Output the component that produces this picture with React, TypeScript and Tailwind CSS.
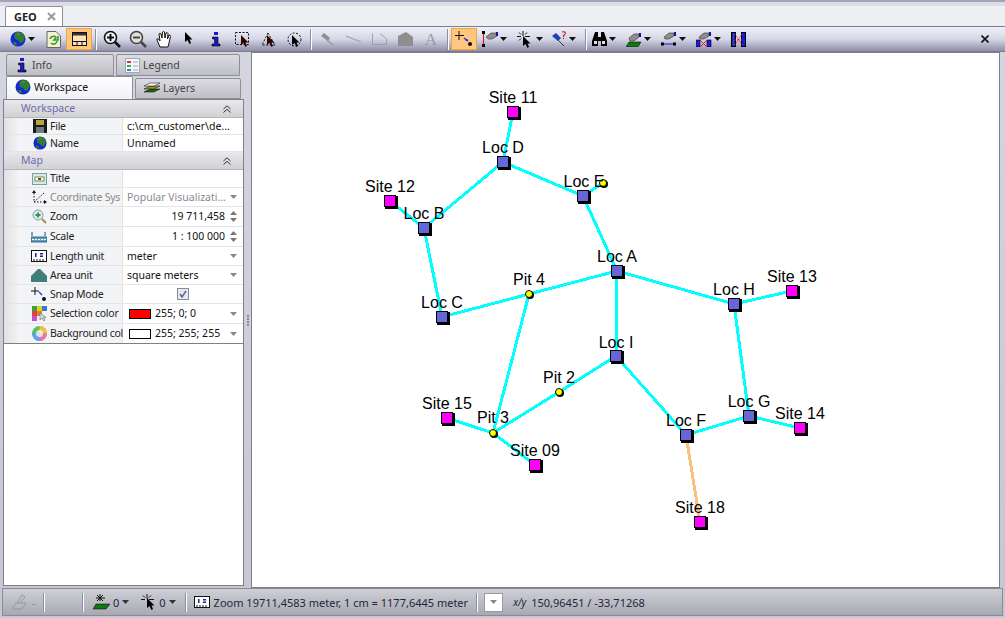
import type { ReactNode } from "react";

const Globe = ({ size = 16 }: { size?: number }) => (
  <svg width={size} height={size} viewBox="0 0 16 16" className="shrink-0">
    <circle cx="8" cy="8" r="7.5" fill="#1526d8" />
    <path d="M6 1 L12 1.5 L15 6 L13 11 L10 12 L8 9 L5 8 L4 4 Z" fill="#2f7d32" />
    <path d="M3 11 L6 11 L7 14 L4 14 Z" fill="#2f7d32" />
    <path d="M7 2 L10 2 L9 4 L7 4 Z" fill="#6d7f3a" />
  </svg>
);

const Caret = ({ color = "#111" }: { color?: string }) => (
  <svg width="7" height="4" viewBox="0 0 7 4" className="shrink-0">
    <path d="M0 0 H7 L3.5 4 Z" fill={color} />
  </svg>
);

const Cursor = ({ x = 0, y = 0, fill = "#000" }: { x?: number; y?: number; fill?: string }) => (
  <path
    transform={`translate(${x} ${y})`}
    d="M0 0 L0 10 L2.5 8 L4.5 12 L6 11 L4.5 7.5 L7.5 7.5 Z"
    fill={fill}
  />
);

const Ico = ({ children, w = 18, h = 18 }: { children: ReactNode; w?: number; h?: number }) => (
  <svg width={w} height={h} viewBox={`0 0 ${w} ${h}`} className="shrink-0">
    {children}
  </svg>
);

const ZoomIco = ({ plus }: { plus?: boolean }) => (
  <Ico>
    <circle cx="7.5" cy="7.5" r="6" fill={plus ? "#f4f4f4" : "#e0e0e0"} stroke={plus ? "#111" : "#444"} strokeWidth="1.6" />
    <path d="M12 12 L17 17" stroke={plus ? "#111" : "#444"} strokeWidth="2.6" />
    <path d="M4 7.5 H11" stroke={plus ? "#111" : "#444"} strokeWidth="2" />
    {plus && <path d="M7.5 4 V11" stroke="#111" strokeWidth="2" />}
  </Ico>
);

const HandIco = () => (
  <Ico>
    <path
      d="M5 17 L2 10 Q1.5 8 3.5 9 L5 11 L4 4 Q4.5 2.5 6 4 L7 8 L7.5 2 Q8.5 1 9.5 2 L10 8 L11 3 Q12.5 2 13 3.5 L12.5 9 L14 5 Q15.5 5 15.5 6.5 L14 13 L13 17 Z"
      fill="#fff"
      stroke="#111"
      strokeWidth="1"
    />
  </Ico>
);

const InfoIco = () => (
  <Ico w={14} h={16}>
    <rect x="5" y="1" width="4" height="3" fill="#1a1ac8" />
    <path d="M3.5 6 H9 V13 H11 V15 H3 V13 H5.5 V8 H3.5 Z" fill="#1a1ac8" stroke="#000" strokeWidth="0.6" />
  </Ico>
);

const Sep = () => <div className="ml-[3px] mr-[2px] h-[21px] w-[2px] shrink-0 border-l border-[#8d8ea6] bg-white" />;

const Slot = ({ children, active }: { children?: ReactNode; active?: boolean }) => (
  <div
    className={`flex h-[22px] w-[26px] shrink-0 items-center justify-center ${
      active ? "border border-[#f2a53c] bg-[#ffc67f]" : ""
    }`}
  >
    {children}
  </div>
);

const Drop = ({ children, w }: { children: ReactNode; w: string }) => (
  <div className={`flex h-[22px] shrink-0 items-center justify-between ${w}`}>
    {children}
    <Caret />
  </div>
);

const Toolbar = () => (
  <div className="flex h-[26px] shrink-0 items-center border-y border-y-[#7d7d85] bg-gradient-to-b from-[#eff0f8] via-[#d6d7e6] to-[#8f8fa9] pl-[10px] pr-[16px]">
    <div className="flex w-[25px] shrink-0 items-center justify-between">
      <Globe />
      <Caret />
    </div>
    <div className="w-[5px] shrink-0" />
    <Slot>
      <Ico w={15} h={17}>
        <path d="M1 .5 H10 L14.5 5 V16.5 H1 Z" fill="#f3f0cf" stroke="#666" />
        <path d="M4 8 A3.5 3.5 0 0 1 10 6.5 L8 9 H12 V5" fill="none" stroke="#2e9e2e" strokeWidth="1.6" />
        <path d="M11 10 A3.5 3.5 0 0 1 5 12" fill="none" stroke="#2e9e2e" strokeWidth="1.6" />
      </Ico>
    </Slot>
    <Slot active>
      <Ico w={15} h={14}>
        <rect x=".5" y=".5" width="14" height="13" fill="#ffe2b8" stroke="#111" />
        <rect x="1" y="1" width="13" height="2.5" fill="#333" />
        <path d="M1 9.5 H14 M5 9.5 V13 M10 9.5 V13" stroke="#111" fill="none" />
      </Ico>
    </Slot>
    <Sep />
    <Slot><ZoomIco plus /></Slot>
    <Slot><ZoomIco /></Slot>
    <Slot><HandIco /></Slot>
    <Slot>
      <Ico w={10} h={14}>
        <Cursor />
      </Ico>
    </Slot>
    <Slot><InfoIco /></Slot>
    <Slot>
      <Ico w={15} h={15}>
        <rect x=".5" y=".5" width="13" height="12" fill="none" stroke="#111" strokeDasharray="2 1.5" />
        <Cursor x={6} y={3} fill="#300" />
      </Ico>
    </Slot>
    <Slot>
      <Ico w={15} h={15}>
        <path d="M7 1 L1 13 H14 Z" fill="none" stroke="#111" strokeDasharray="2 1.5" />
        <Cursor x={6} y={3} fill="#300" />
      </Ico>
    </Slot>
    <Slot>
      <Ico w={15} h={15}>
        <circle cx="7.5" cy="7.5" r="6.5" fill="none" stroke="#111" strokeDasharray="2 1.5" />
        <Cursor x={5} y={3} />
      </Ico>
    </Slot>
    <Sep />
    <Slot>
      <Ico w={14} h={14}>
        <path d="M1 4 L4 1 L10 6 L8 9 Z" fill="#8e8e8e" />
        <path d="M7 8 L13 13" stroke="#999" strokeWidth="1.5" />
      </Ico>
    </Slot>
    <Slot>
      <Ico w={15} h={8}>
        <path d="M0 1 L15 7" stroke="#a7a7b0" strokeWidth="1.2" />
      </Ico>
    </Slot>
    <Slot>
      <Ico w={15} h={12}>
        <path d="M.5 .5 V11.5 H14.5 V6 L8 .5" fill="none" stroke="#a0a0a8" />
      </Ico>
    </Slot>
    <Slot>
      <Ico w={15} h={14}>
        <path d="M0 4 L8 0 L15 5 V14 H0 Z" fill="#8e8e8e" />
      </Ico>
    </Slot>
    <Slot>
      <span className="font-['Liberation_Serif',serif] text-[17px] leading-none text-[#9a9aa2]">A</span>
    </Slot>
    <Sep />
    <Slot active>
      <Ico w={18} h={16}>
        <path d="M4 0 V9 M0 4.500 H9" stroke="#111" />
        <path d="M9 7 L13 10" stroke="#1b2be0" strokeWidth="1.4" />
        <path d="M10 10 H13 V8 Z" fill="#1b2be0" />
        <circle cx="15" cy="13" r="2" fill="#111" />
      </Ico>
    </Slot>
    <div className="w-[5px] shrink-0" />
    <Drop w="w-[25px]">
      <Ico w={17} h={16}>
        <path d="M1.500 2 V15" stroke="#e01c1c" strokeWidth="1.2" />
        <rect y="0" width="3" height="3" fill="#000" />
        <rect y="13" width="3" height="3" fill="#000" />
        <path d="M4 6 L9 2 H15 V5 L10 8 H6 Z" fill="#8d8d8d" stroke="#333" strokeWidth=".6" />
        <rect x="14" y="1" width="2" height="4" fill="#14149c" />
      </Ico>
    </Drop>
    <div className="w-[10px] shrink-0" />
    <Drop w="w-[26px]">
      <Ico w={15} h={17}>
        <path d="M6 0 V5 M0 5.500 H4 M8 5.500 H13 M2 1.500 L4 3.500 M10 1.500 L8 3.500 M2 9.500 L4 7.500" stroke="#111" />
        <Cursor x={6} y={5} />
      </Ico>
    </Drop>
    <div className="w-[8px] shrink-0" />
    <Drop w="w-[25px]">
      <Ico w={18} h={16}>
        <path d="M1 5 L5 2 L10 7 L7 10 Z" fill="#1b3fc0" />
        <path d="M7 9 L13 15" stroke="#333" />
        <path d="M11 1 Q15 0 14 3 L12.500 5 V6 M12.500 7 V8" fill="none" stroke="#c02020" strokeWidth="1.2" />
      </Ico>
    </Drop>
    <div className="w-[6px] shrink-0" />
    <Sep />
    <div className="w-[2px] shrink-0" />
    <Drop w="w-[25px]">
      <Ico w={17} h={14}>
        <path d="M4 0 H7 V5 H10 V0 H13 L16 9 V14 H10 V9 H7 V14 H1 V9 Z" fill="#000" />
        <rect x="3" y="9" width="3" height="3" fill="#ddd" />
        <rect x="11" y="9" width="3" height="3" fill="#ddd" />
      </Ico>
    </Drop>
    <div className="w-[10px] shrink-0" />
    <Drop w="w-[25px]">
      <Ico w={16} h={15}>
        <path d="M3 10 H15 L12 15 H0 Z" fill="#117611" stroke="#000" strokeWidth=".5" />
        <path d="M3 6 L8 2 H13 V5 L8 9 H4 Z" fill="#8d8d8d" stroke="#333" strokeWidth=".6" />
        <rect x="13" y="1" width="2" height="4" fill="#14149c" />
      </Ico>
    </Drop>
    <div className="w-[10px] shrink-0" />
    <Drop w="w-[25px]">
      <Ico w={16} h={14}>
        <path d="M3 5 L8 1 H13 V4 L8 7 H4 Z" fill="#8d8d8d" stroke="#333" strokeWidth=".6" />
        <rect x="13" y="0" width="2" height="4" fill="#14149c" />
        <path d="M1 12 H14" stroke="#1b1bd0" />
        <rect y="10.500" width="3" height="3" fill="#000" />
        <rect x="12" y="10.500" width="3" height="3" fill="#000" />
      </Ico>
    </Drop>
    <div className="w-[10px] shrink-0" />
    <Drop w="w-[25px]">
      <Ico w={16} h={15}>
        <path d="M3 5 L8 1 H13 V4 L8 7 H4 Z" fill="#8d8d8d" stroke="#333" strokeWidth=".6" />
        <rect x="13" y="0" width="2" height="4" fill="#14149c" />
        <rect x="0" y="8" width="4" height="7" fill="#1b1be0" stroke="#000" strokeWidth=".6" />
        <rect x="11" y="8" width="4" height="7" fill="#1b1be0" stroke="#000" strokeWidth=".6" />
        <path d="M4 8 L11 15 M11 8 L4 15" stroke="#e02020" />
      </Ico>
    </Drop>
    <div className="w-[10px] shrink-0" />
    <Ico w={15} h={15}>
      <rect x=".5" y=".5" width="4" height="14" fill="#1b1be0" stroke="#000" />
      <rect x="10.500" y=".5" width="4" height="14" fill="#1b1be0" stroke="#000" />
      <path d="M4 2 L11 13 M11 2 L4 13 M4 8 L11 8" stroke="#e02020" strokeDasharray="1 1" />
      <path d="M2.500 2 V13" stroke="#1a9a40" strokeDasharray="1 1" />
    </Ico>
    <div className="flex-1" />
    <svg width="8" height="8" viewBox="0 0 8 8">
      <path d="M.5 .5 L7.500 7.500 M7.500 .5 L.5 7.500" stroke="#111" strokeWidth="1.6" />
    </svg>
  </div>
);

const Tab = ({
  icon,
  label,
  w,
  active,
  h,
}: {
  icon: ReactNode;
  label: string;
  w: string;
  h: string;
  active?: boolean;
}) => (
  <div
    className={`flex shrink-0 items-center gap-[3px] rounded-t-[2px] border border-[#8e8e96] pl-[8px] ${w} ${h} ${
      active
        ? "border-b-0 bg-gradient-to-b from-[#ffffff] to-[#f0f1f6] pb-[2px] text-[#111]"
        : "bg-gradient-to-b from-[#dcdce2] to-[#bebfc4] text-[#444]"
    }`}
  >
    {icon}
    <span>{label}</span>
  </div>
);

const SectionHead = ({ title }: { title: string }) => (
  <div className="flex h-[18px] items-center justify-between border-b border-[#b8b8b8] bg-gradient-to-b from-[#e9e9ed] to-[#d0d1d5] pl-[17px] pr-[12px] text-[#6d6da8]">
    <span>{title}</span>
    <svg width="8" height="8" viewBox="0 0 8 8" fill="none" stroke="#333">
      <path d="M.5 4 L4 .8 L7.500 4 M.5 7.500 L4 4.300 L7.500 7.500" />
    </svg>
  </div>
);

const Spin = () => (
  <div className="flex flex-col gap-[3px]">
    <svg width="7" height="4" viewBox="0 0 7 4"><path d="M0 4 H7 L3.500 0 Z" fill="#777" /></svg>
    <Caret color="#777" />
  </div>
);

const Row = ({
  h,
  icon,
  label,
  dim,
  children,
  right,
  alignEnd,
  last,
}: {
  h: string;
  icon: ReactNode;
  label: string;
  dim?: boolean;
  children?: ReactNode;
  right?: ReactNode;
  alignEnd?: boolean;
  last?: boolean;
}) => (
  <div className={`flex border-b ${last ? "border-[#7f7f86]" : "border-[#e4e4e8]"} ${h}`}>
    <div className="w-[14px] shrink-0 bg-gradient-to-r from-[#e2e2e6] to-[#f1f1f4]" />
    <div className="flex w-[105px] shrink-0 items-center whitespace-nowrap border-r border-[#e2e2e6] bg-[#f3f4f6]">
      <div className="flex w-[32px] shrink-0 justify-end pr-[3px]">{icon}</div>
      <span className={`tracking-[-0.25px] ${dim ? "text-[#888]" : "text-[#222]"}`}>{label}</span>
    </div>
    <div
      className={`flex min-w-0 flex-1 items-center whitespace-nowrap bg-white pl-[4px] pr-[6px] ${
        dim ? "text-[#8a8a92]" : "text-[#111]"
      } ${alignEnd ? "justify-end gap-[5px]" : "justify-between"}`}
    >
      {children}
      {right}
    </div>
  </div>
);

const Swatch = ({ color, text }: { color: string; text: string }) => (
  <span className="ml-[2px] flex items-center gap-[4px]">
    <span className={`h-[10px] w-[22px] border border-black ${color}`} />
    <span>{text}</span>
  </span>
);

const Properties = () => (
  <div className="flex-1 border border-[#7f7f86] bg-white">
    <SectionHead title="Workspace" />
    <Row
      h="h-[17px]"
      label="File"
      icon={
        <Ico w={14} h={14}>
          <rect width="14" height="14" fill="#1c1c1c" />
          <rect x="3" y="1" width="8" height="5" fill="#b7a63a" />
          <rect x="3" y="8" width="8" height="6" fill="#6f7d7f" />
        </Ico>
      }
    >
      c:\cm_customer\de...
    </Row>
    <Row h="h-[17px]" label="Name" icon={<Globe size={14} />}>
      Unnamed
    </Row>
    <SectionHead title="Map" />
    <Row
      h="h-[18px]"
      label="Title"
      icon={
        <Ico w={15} h={12}>
          <rect x=".5" y=".5" width="14" height="11" fill="#dceadb" stroke="#7a9bb0" />
          <rect x="3" y="4" width="9" height="4" fill="#fff" stroke="#2e8a3a" strokeWidth=".8" />
          <rect x="6" y="5" width="3" height="2" fill="#c02020" />
        </Ico>
      }
    />
    <Row
      h="h-[19px]"
      label="Coordinate Sys"
      dim
      icon={
        <Ico w={15} h={15}>
          <path d="M2 3 V12 H13 M2 12 L12 3" fill="none" stroke="#111" strokeDasharray="1.500 1.500" />
          <path d="M2 0 L0 3 H4 Z M15 12 L12 10 V14 Z" fill="#111" />
        </Ico>
      }
      right={<Caret color="#888" />}
    >
      Popular Visualizati...
    </Row>
    <Row
      h="h-[20px]"
      label="Zoom"
      alignEnd
      icon={
        <Ico w={15} h={15}>
          <circle cx="6" cy="6" r="5" fill="#dfe8ef" stroke="#8aa0b0" />
          <path d="M3.500 6 H8.500 M6 3.500 V8.500" stroke="#2e9e2e" strokeWidth="1.800" />
          <path d="M10 10 L14 14" stroke="#a08a5a" strokeWidth="2" />
        </Ico>
      }
      right={<Spin />}
    >
      19 711,458
    </Row>
    <Row
      h="h-[20px]"
      label="Scale"
      alignEnd
      icon={
        <Ico w={16} h={12}>
          <path d="M1 1 V5 M14 1 V5" stroke="#124a80" />
          <rect y="6" width="16" height="5" fill="#5fa0c0" stroke="#124a80" strokeWidth=".8" />
          <path d="M1 8.500 H15" stroke="#fff" strokeDasharray="2 1" />
        </Ico>
      }
      right={<Spin />}
    >
      1 : 100 000
    </Row>
    <Row
      h="h-[19px]"
      label="Length unit"
      icon={
        <Ico w={16} h={12}>
          <rect x=".5" y=".5" width="15" height="11" fill="#fff" stroke="#111" />
          <path d="M3 12 V9 M6 12 V9 M9 12 V9 M12 12 V9" stroke="#111" />
          <rect x="4" y="3" width="1.500" height="4" fill="#1c1c9c" />
          <rect x="9" y="3" width="3" height="1.500" fill="#1c1c9c" />
          <rect x="9" y="5.500" width="3" height="1.500" fill="#1c1c9c" />
        </Ico>
      }
      right={<Caret color="#888" />}
    >
      meter
    </Row>
    <Row
      h="h-[19px]"
      label="Area unit"
      icon={
        <Ico w={16} h={13}>
          <path d="M0 7 L7 0 H9 L16 7 V13 H0 Z" fill="#3f7f7a" />
        </Ico>
      }
      right={<Caret color="#888" />}
    >
      square meters
    </Row>
    <Row
      h="h-[19px]"
      label="Snap Mode"
      icon={
        <Ico w={16} h={15}>
          <path d="M4 0 V8 M0 4 H8" stroke="#111" />
          <path d="M8 5 L11 8" stroke="#1b2be0" strokeWidth="1.200" />
          <circle cx="13" cy="12" r="2" fill="#111" />
        </Ico>
      }
    >
      <span className="ml-[50px] flex h-[12px] w-[12px] items-center justify-center border border-[#8a8a92] bg-[#e6e8f2]">
        <svg width="8" height="8" viewBox="0 0 8 8">
          <path d="M1 4 L3 7 L7 1" fill="none" stroke="#5a6a8a" strokeWidth="1.500" />
        </svg>
      </span>
    </Row>
    <Row
      h="h-[20px]"
      label="Selection color"
      icon={
        <Ico w={15} h={15}>
          <rect width="5" height="5" fill="#3fa03f" />
          <rect x="5" width="5" height="5" fill="#e0d020" />
          <rect x="10" width="5" height="5" fill="#3a78d0" />
          <rect y="5" width="5" height="5" fill="#e04040" />
          <rect x="5" y="5" width="5" height="5" fill="#e08030" />
          <rect y="10" width="5" height="5" fill="#c050d0" />
          <path d="M8 7 V14 L10 12 L12 15 L13 14 L11.500 11.500 H14 Z" fill="#ddd" stroke="#666" strokeWidth=".6" />
        </Ico>
      }
      right={<Caret color="#888" />}
    >
      <Swatch color="bg-[#ff0000]" text="255; 0; 0" />
    </Row>
    <Row
      h="h-[20px]"
      label="Background col"
      last
      icon={
        <svg width="15" height="15" viewBox="0 0 15 15" className="shrink-0">
          <circle cx="7.500" cy="7.500" r="7.500" fill="#55c060" />
          <path d="M7.500 7.500 V0 A7.500 7.500 0 0 1 15 7.500 Z" fill="#f5c040" />
          <path d="M7.500 7.500 H15 A7.500 7.500 0 0 1 7.500 15 Z" fill="#f070b0" />
          <path d="M7.500 7.500 V15 A7.500 7.500 0 0 1 0 7.500 Z" fill="#60a0f0" />
          <circle cx="7.500" cy="7.500" r="3.500" fill="#fff" opacity=".7" />
        </svg>
      }
      right={<Caret color="#888" />}
    >
      <Swatch color="bg-white" text="255; 255; 255" />
    </Row>
  </div>
);

const nodes: Record<string, [number, number]> = {
  s11: [513, 112],
  s12: [390, 201],
  s13: [792, 291],
  s14: [800, 428],
  s15: [447, 418],
  s09: [535, 465],
  s18: [700, 522],
  d: [503, 162],
  e: [583, 196],
  a: [617, 271],
  b: [424, 228],
  c: [442, 317],
  h: [734, 304],
  i: [616, 356],
  g: [749, 416],
  f: [686, 435],
  p4: [529, 294],
  p2: [559, 392],
  p3: [493, 433],
  y: [603, 183],
};

const edges = [
  ["s11", "d"],
  ["d", "b"],
  ["d", "e"],
  ["e", "y"],
  ["e", "a"],
  ["a", "p4"],
  ["a", "h"],
  ["a", "i"],
  ["p4", "c"],
  ["p4", "p3"],
  ["b", "c"],
  ["s12", "b"],
  ["h", "s13"],
  ["h", "g"],
  ["i", "p2"],
  ["p2", "p3"],
  ["i", "f"],
  ["f", "g"],
  ["g", "s14"],
  ["s15", "p3"],
  ["p3", "s09"],
];

const labels: [string, number, number][] = [
  ["Site 11", 513, 103],
  ["Loc D", 503, 153],
  ["Loc E", 584, 187],
  ["Site 12", 390, 192],
  ["Loc B", 424, 219],
  ["Loc A", 617, 262],
  ["Pit 4", 529, 285],
  ["Loc C", 442, 308],
  ["Loc H", 734, 295],
  ["Site 13", 792, 282],
  ["Loc I", 616, 348],
  ["Pit 2", 559, 383],
  ["Site 15", 447, 409],
  ["Pit 3", 493, 423],
  ["Site 09", 535, 456],
  ["Loc G", 749, 407],
  ["Site 14", 800, 419],
  ["Loc F", 686, 426],
  ["Site 18", 700, 513],
];

// coordinates above are page coordinates, the svg sits at 252,53
const MapView = () => (
  <div className="min-w-0 flex-1 border border-[#7f7f86] bg-white">
    <svg width="748" height="534" viewBox="252 53 748 534" className="block font-['Liberation_Sans',sans-serif]">
      {edges.map(([from, to]) => (
        <line
          key={from + to}
          x1={nodes[from][0]}
          y1={nodes[from][1]}
          x2={nodes[to][0]}
          y2={nodes[to][1]}
          stroke="#00ffff"
          strokeWidth="3"
          shapeRendering="crispEdges"
        />
      ))}
      <line x1={686} y1={435} x2={700} y2={522} stroke="#fbc07c" strokeWidth="3" shapeRendering="crispEdges" />
      {Object.entries(nodes).map(([id, [x, y]]) => {
        if (id === "p4" || id === "p2" || id === "p3" || id === "y") {
          return (
            <g key={id}>
              <circle cx={x + 1} cy={y + 1} r="4" fill="#000" />
              <circle cx={x} cy={y} r="3.500" fill="#ffff00" stroke="#000" />
            </g>
          );
        }
        const fill = id[0] === "s" ? "#ff00ff" : "#6666d8";
        return (
          <g key={id} shapeRendering="crispEdges">
            <rect x={x - 5} y={y - 5} width="13" height="13" fill="#000" />
            <rect x={x - 5.500} y={y - 5.500} width="11" height="11" fill={fill} stroke="#000" />
          </g>
        );
      })}
      {labels.map(([text, x, y]) => (
        <text key={text} x={x} y={y} textAnchor="middle" fontSize="16" fill="#000">
          {text}
        </text>
      ))}
    </svg>
  </div>
);

const StatusSep = () => <div className="h-[19px] w-[2px] shrink-0 border-l border-[#8d8ea6] bg-white" />;

const StatusBar = () => (
  <div className="mx-[2px] flex h-[28px] items-center border border-[#8a8a92] bg-gradient-to-b from-[#cfd0d6] to-[#a8a9b2] text-[11px] text-[#25253f]">
    <div className="ml-[8px] flex w-[32px] shrink-0 items-center gap-[4px] text-[#888]">
      <Ico w={17} h={16}>
        <path d="M1 15 L5 9 H15 L11 15 Z" fill="none" stroke="#999" />
        <path d="M6 9 L11 1 L14 3 L9 9" fill="none" stroke="#999" />
      </Ico>
      <span>-</span>
    </div>
    <StatusSep />
    <div className="w-[37px] shrink-0" />
    <StatusSep />
    <div className="ml-[9px] flex items-center gap-[3px]">
      <Ico w={17} h={16}>
        <path d="M3 10 H17 L13 15 H0 Z" fill="#117611" stroke="#000" strokeWidth=".5" />
        <path d="M7 0 V7 M3 4 H12 M4 1 L10 7 M10 1 L4 7" stroke="#111" />
      </Ico>
      <span>0</span>
      <Caret color="#333" />
    </div>
    <div className="ml-[12px] flex items-center gap-[3px]">
      <Ico w={15} h={16}>
        <path d="M6 0 V5 M0 5.500 H4 M8 5.500 H13 M2 1.500 L4 3.500 M10 1.500 L8 3.500" stroke="#111" />
        <Cursor x={6} y={4} />
      </Ico>
      <span>0</span>
      <Caret color="#333" />
    </div>
    <div className="ml-[9px]"><StatusSep /></div>
    <div className="ml-[7px] flex shrink-0 items-center gap-[4px] whitespace-nowrap">
      <Ico w={16} h={12}>
        <rect x=".5" y=".5" width="15" height="11" fill="#fff" stroke="#111" />
        <path d="M3 12 V9 M6 12 V9 M9 12 V9 M12 12 V9" stroke="#111" />
        <rect x="4" y="3" width="1.500" height="4" fill="#1c1c9c" />
        <rect x="9" y="3" width="3" height="1.500" fill="#1c1c9c" />
        <rect x="9" y="5.500" width="3" height="1.500" fill="#1c1c9c" />
      </Ico>
      <span>Zoom 19711,4583 meter, 1 cm = 1177,6445 meter</span>
    </div>
    <div className="ml-[8px]"><StatusSep /></div>
    <div className="ml-[6px] flex h-[19px] w-[19px] items-center justify-center border border-[#9a9aa2] bg-white">
      <Caret color="#888" />
    </div>
    <span className="ml-[10px] text-[10px] italic">x/y</span>
    <span className="ml-[5px]">150,96451 / -33,71268</span>
  </div>
);

export default function App() {
  return (
    <div className="flex h-[618px] w-[1005px] flex-col overflow-hidden bg-[#eeeff3] font-['Noto_Sans',sans-serif] text-[10.5px] leading-none">
      <div className="h-[6px] shrink-0 border-t-2 border-t-[#a5a3b8] bg-[#dcdbea]" />
      <div className="flex h-[20px] shrink-0 pl-[5px]">
        <div className="flex w-[58px] items-center gap-[10px] rounded-t-[2px] border border-b-0 border-[#8e8e96] bg-white pl-[8px] text-[11px] font-bold text-[#222]">
          <span>GEO</span>
          <svg width="9" height="9" viewBox="0 0 9 9">
            <path d="M1 1 L8 8 M8 1 L1 8" stroke="#9a9aa2" strokeWidth="2" />
          </svg>
        </div>
      </div>
      <Toolbar />
      <div className="flex min-h-0 flex-1 bg-gradient-to-b from-[#d4d5e0] to-[#c6c7d2] pl-[3px] pr-[5px]">
        <div className="flex w-[241px] shrink-0 flex-col pb-[2px] pt-[2px]">
          <div className="flex h-[22px] shrink-0 gap-[2px] pl-[3px]">
            <Tab w="w-[108px]" h="h-[22px]" label="Info" icon={<InfoIco />} />
            <Tab
              w="w-[124px]"
              h="h-[22px]"
              label="Legend"
              icon={
                <Ico w={15} h={15}>
                  <rect x=".5" y=".5" width="14" height="14" fill="#f4f6fa" stroke="#9aa8c0" />
                  <path d="M2 4 H6" stroke="#e03030" strokeWidth="2" />
                  <path d="M2 8 H6" stroke="#40b040" strokeWidth="2" />
                  <path d="M2 12 H6" stroke="#4080e0" strokeWidth="2" />
                  <path d="M8 4 H13 M8 8 H13 M8 12 H13" stroke="#9aa8c0" />
                </Ico>
              }
            />
          </div>
          <div className="flex h-[23px] shrink-0 items-end gap-[2px] pl-[3px]">
            <Tab w="w-[127px]" h="h-[23px]" label="Workspace" active icon={<Globe />} />
            <Tab
              w="w-[106px]"
              h="h-[21px]"
              label="Layers"
              icon={
                <Ico w={16} h={15}>
                  <path d="M0 11 L10 11 L16 8 L6 8 Z" fill="#146c14" stroke="#000" strokeWidth=".5" />
                  <path d="M0 8 L10 8 L16 5 L6 5 Z" fill="#a09020" stroke="#000" strokeWidth=".5" />
                  <path d="M0 5 L10 5 L16 2 L6 2 Z" fill="#f4f4f4" stroke="#000" strokeWidth=".5" />
                </Ico>
              }
            />
          </div>
          <Properties />
        </div>
        <div className="flex w-[7px] shrink-0 flex-col items-center justify-center gap-[1px]">
          {[0, 1, 2, 3].map((n) => (
            <div key={n} className="h-[2px] w-[2px] bg-[#8a8a92]" />
          ))}
        </div>
        <MapView />
      </div>
      <div className="shrink-0 bg-[#c6c7d2] pb-[2px]">
        <StatusBar />
      </div>
    </div>
  );
}
